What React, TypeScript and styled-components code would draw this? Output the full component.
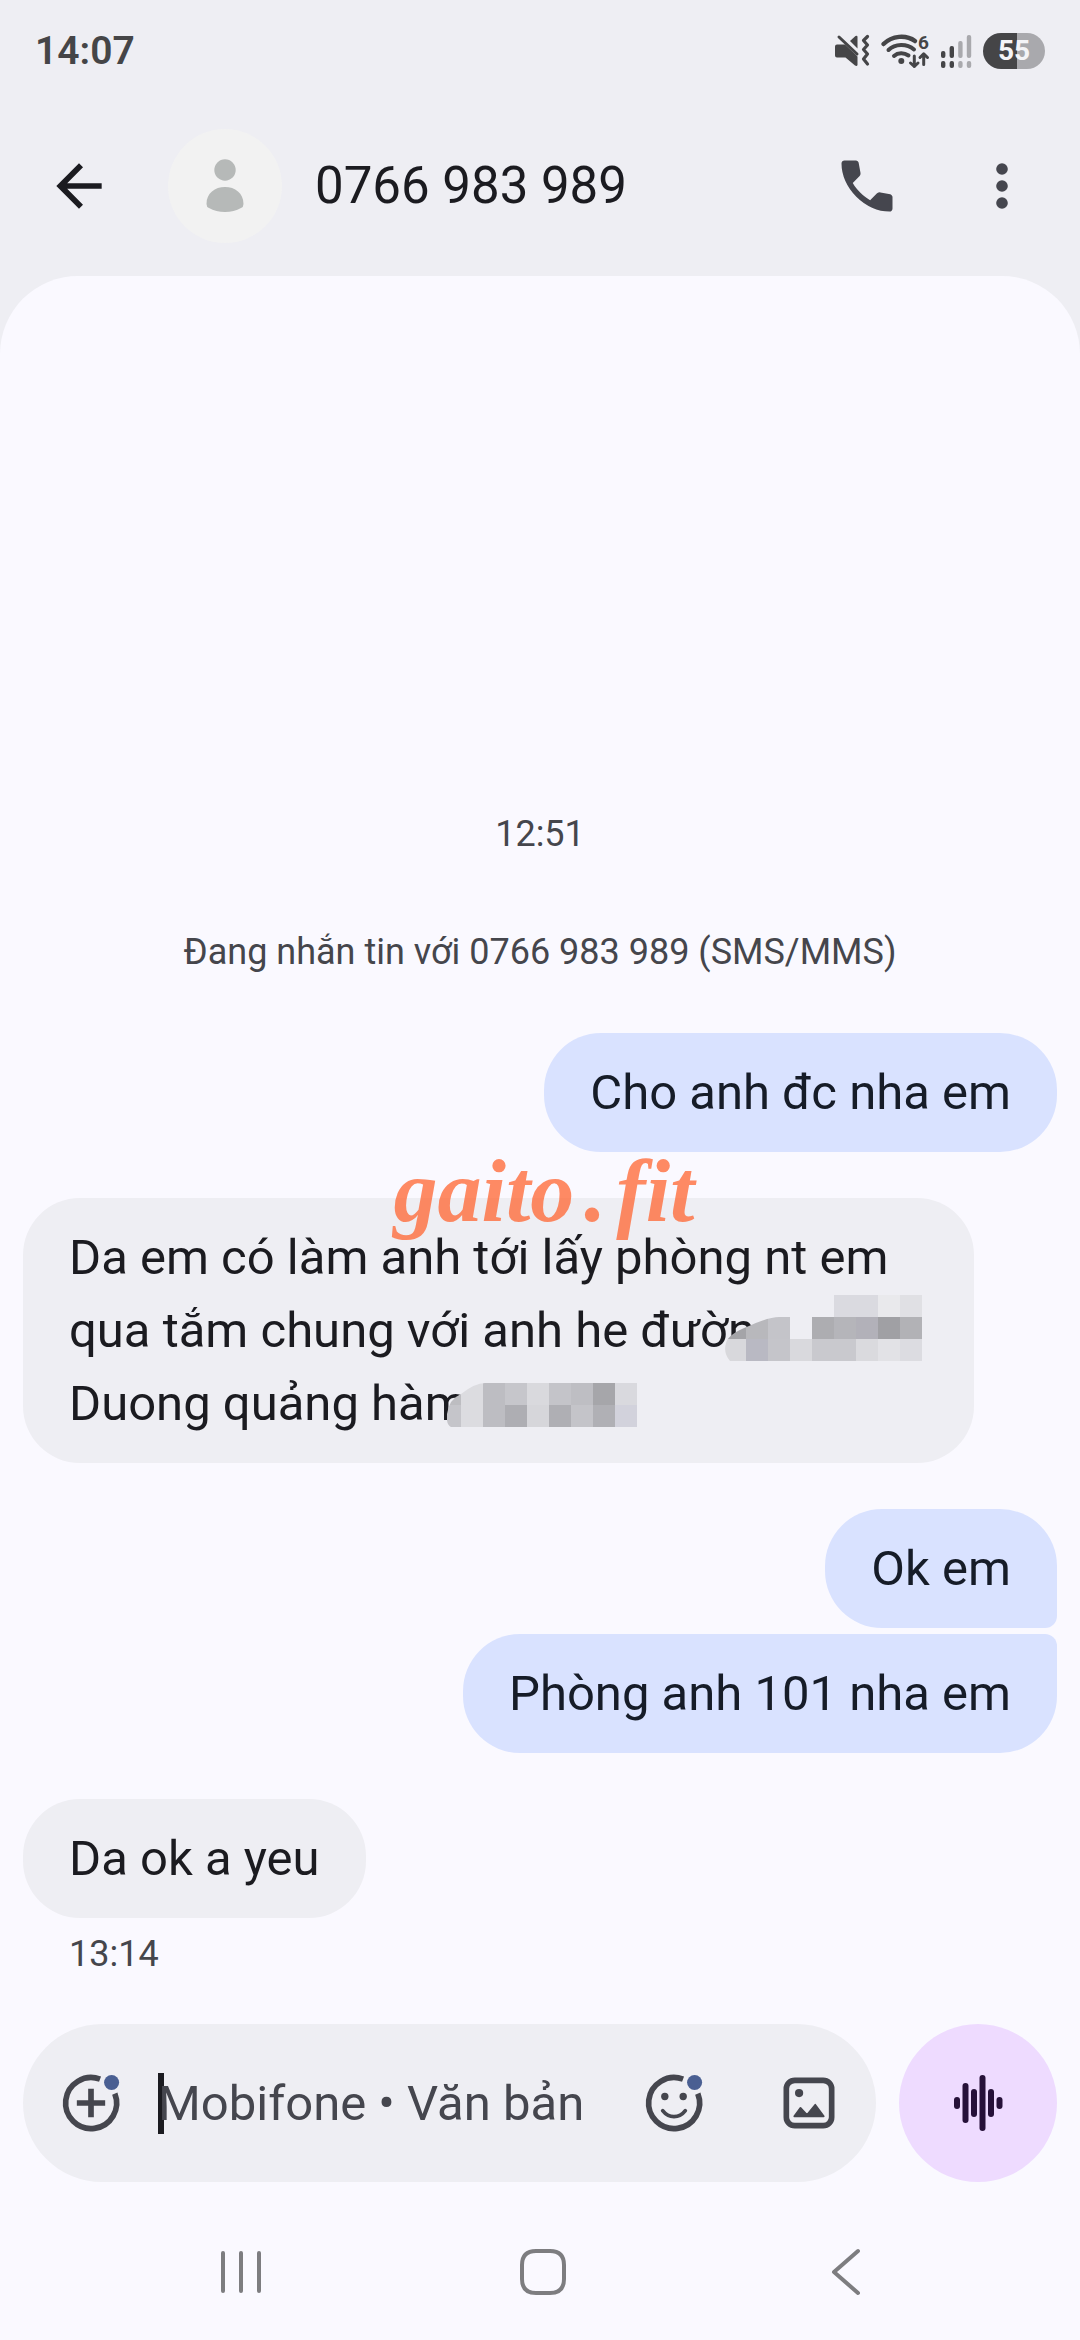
import React from "react";
import styled, { createGlobalStyle } from "styled-components";

const GlobalStyle = createGlobalStyle`
  *, *::before, *::after { box-sizing: border-box; }
  body { margin: 0; background: #eeeef3; }
  button, input { font: inherit; color: inherit; }
`;

const Screen = styled.div`
  display: flex;
  flex-direction: column;
  min-height: 100vh;
  background: #eeeef3;
  color: #1b1b20;
  font-family: Roboto, "Noto Sans", sans-serif;
  font-size: 49px;
  overflow-x: hidden;
`;

/* ---------- status bar ---------- */

const StatusBar = styled.div`
  display: flex;
  align-items: center;
  justify-content: space-between;
  height: 96px;
  padding: 6px 35px 0;
  color: #454547;
`;

const Clock = styled.time`
  font-size: 39px;
  font-weight: 600;
`;

const StatusIcons = styled.div`
  display: flex;
  align-items: center;
  gap: 11px;

  svg { overflow: visible; }
`;

const Battery = styled.span`
  width: 62px;
  height: 36px;
  border-radius: 18px;
  background: linear-gradient(90deg, #454547 55%, #a9a9ad 55%);
  color: #f4f4f7;
  font-size: 28px;
  font-weight: 700;
  line-height: 36px;
  text-align: center;
`;

const MuteIcon = () => (
  <svg width="35" height="34" viewBox="0 0 35 34" fill="#454547" aria-label="Rung">
    <path d="M2 10.500H10L22.500 22.500V31Q22 32.500 20 31.500L10.500 23.500H2Q0 23.500 0 21.500V12.500Q0 10.500 2 10.500Z" />
    <path d="M15 7L20.500 2Q22.500 1 22.500 3V14.500Z" />
    <path d="M4 3L22 20" stroke="#454547" strokeWidth="3" strokeLinecap="round" />
    <path
      d="M32.500 2.500L28.500 6.500L32.500 11L28.500 15.500L32.500 20L28.500 25L32.500 30"
      fill="none"
      stroke="#454547"
      strokeWidth="3.200"
      strokeLinecap="round"
      strokeLinejoin="round"
    />
  </svg>
);

const WifiIcon = () => (
  <svg width="48" height="34" viewBox="0 0 48 34" aria-label="Wi-Fi 6">
    <g fill="none" stroke="#454547" strokeWidth="4" strokeLinecap="round">
      <path d="M2.500 10C11 1.500 25 0.500 34 7" strokeWidth="4.500" />
      <path d="M7.500 16C14 9.500 26 9.500 33 15.500" />
      <path d="M13 22C17 18.500 23 18.500 27.500 21.500" />
      <path d="M33.300 22V32.500M29.500 29L33.300 32.500L37 29M42.700 30.500V20M39 23.500L42.700 19.800L46.500 23.500" strokeWidth="3" strokeLinejoin="round" />
    </g>
    <circle cx="20.300" cy="27" r="3" fill="#454547" />
    <text x="37" y="15" fontSize="19" fontWeight="700" fill="#454547">6</text>
  </svg>
);

const SignalIcon = () => (
  <svg width="32" height="34" viewBox="0 0 32 34" aria-label="Sóng di động">
    {[17, 12, 7, 1].map((top, i) => (
      <g key={top} fill={i < 2 ? "#454547" : "#a9a9ad"}>
        <rect x={1 + i * 8.6} y={top} width="4.400" height={24 - top} rx="2" />
        <rect x={1 + i * 8.6} y="27" width="4.400" height="7" rx="2" />
      </g>
    ))}
  </svg>
);

/* ---------- toolbar ---------- */

const Toolbar = styled.header`
  display: flex;
  align-items: center;
  height: 180px;
  padding: 0 44px 0 45px;
`;

const IconButton = styled.button`
  position: relative;
  display: flex;
  flex: none;
  width: 68px;
  height: 68px;
  padding: 0;
  border: 0;
  background: none;
  color: #45464e;
  cursor: pointer;

  svg { width: 100%; height: 100%; }
`;

const BackButton = styled(IconButton)`
  color: #1b1b20;
`;

const Avatar = styled.span`
  display: flex;
  align-items: center;
  justify-content: center;
  flex: none;
  width: 114px;
  height: 114px;
  margin-left: 55px;
  border-radius: 50%;
  background: #f2f2f2;
`;

const Title = styled.h1`
  flex: 1;
  min-width: 0;
  margin: 0 0 0 33px;
  font-size: 51px;
  font-weight: 400;
  line-height: 72px;
  white-space: nowrap;
`;

const Actions = styled.div`
  display: flex;
  gap: 67px;
`;

/* ---------- conversation ---------- */

const Panel = styled.main`
  display: flex;
  flex: 1;
  flex-direction: column;
  border-radius: 78px 78px 0 0;
  background: #faf9ff;
`;

const Thread = styled.section`
  display: flex;
  flex: 1;
  flex-direction: column;
  justify-content: flex-end;
  padding: 64px 23px 43px;
`;

const Note = styled.p<{ $gap: number }>`
  margin: 0 0 ${(p) => p.$gap}px;
  color: #45464c;
  font-size: 36px;
  line-height: 54px;
  text-align: center;
`;

const Group = styled.div<{ $mine?: boolean }>`
  position: relative;
  display: flex;
  flex-direction: column;
  align-items: ${(p) => (p.$mine ? "flex-end" : "flex-start")};
  gap: 6px;

  & + & { margin-top: 46px; }
`;

const Bubble = styled.div<{ $mine?: boolean; $wide?: boolean; $join?: "above" | "below" }>`
  position: relative;
  width: ${(p) => (p.$wide ? "92%" : "auto")};
  max-width: 92%;
  padding: 23px 46px;
  border-radius: 57px;
  border-bottom-right-radius: ${(p) => (p.$join === "below" ? 12 : 57)}px;
  border-top-right-radius: ${(p) => (p.$join === "above" ? 12 : 57)}px;
  background: ${(p) => (p.$mine ? "#d9e2ff" : "#eeeef3")};
  color: ${(p) => (p.$mine ? "#161c28" : "#1b1b20")};
  line-height: 73px;
`;

const SentAt = styled.time`
  margin: 3px 0 0 46px;
  color: #45464c;
  font-size: 36px;
  line-height: 54px;
`;

const Mosaic = styled.svg<{ $x: number; $y: number }>`
  position: absolute;
  left: ${(p) => p.$x}px;
  top: ${(p) => p.$y}px;
`;

const Watermark = styled.div`
  position: absolute;
  top: -54px;
  left: 8px;
  right: 0;
  display: flex;
  justify-content: center;
  gap: 10px;
  color: rgba(255, 100, 48, 0.75);
  font-family: "Liberation Serif", serif;
  font-size: 88px;
  font-style: italic;
  font-weight: 700;
  line-height: 96px;
  pointer-events: none;
`;

type Cell = [x: number, y: number, w: number, color: string];

const streetCells: Cell[] = [
  [109, 0, 44, "#dadae0"], [153, 0, 22, "#e9e9ec"], [175, 0, 22, "#e0e0e4"],
  [0, 22, 21, "#a4a4a8"], [21, 22, 22, "#b8b8bc"], [43, 22, 22, "#c4c4c9"],
  [87, 22, 22, "#adadb1"], [109, 22, 22, "#b5b5ba"], [131, 22, 22, "#b2b1b9"],
  [153, 22, 22, "#a0a0a4"], [175, 22, 22, "#b2b2b6"],
  [0, 44, 21, "#d8d8dc"], [21, 44, 22, "#b9b9c3"], [43, 44, 22, "#c5c5ca"],
  [65, 44, 22, "#d9d9dd"], [87, 44, 44, "#c9c9ce"], [131, 44, 22, "#dadade"],
  [153, 44, 22, "#e2e2e6"], [175, 44, 22, "#dcdce1"],
];

const numberCells: Cell[] = [
  [0, 0, 14, "#bdbdc1"], [14, 0, 22, "#dcdce0"], [36, 0, 22, "#bdbdc2"],
  [58, 0, 22, "#c6c6cb"], [80, 0, 22, "#d9d9dd"], [102, 0, 22, "#c4c4c9"],
  [124, 0, 22, "#bebec3"], [146, 0, 22, "#a6a6aa"], [168, 0, 22, "#d9d9de"],
  [0, 22, 14, "#c5c5ca"], [14, 22, 22, "#dcdce0"], [36, 22, 22, "#bdbdc2"],
  [58, 22, 22, "#aeaeb3"], [80, 22, 22, "#d6d6da"], [102, 22, 22, "#afafb4"],
  [124, 22, 22, "#c4c4c9"], [146, 22, 22, "#b0b0b5"], [168, 22, 22, "#d2d2dc"],
];

const Cells = ({ cells }: { cells: Cell[] }) => (
  <>
    {cells.map(([x, y, w, color]) => (
      <rect key={`${x}-${y}`} x={x} y={y} width={w} height="22" fill={color} />
    ))}
  </>
);

/* ---------- composer ---------- */

const Composer = styled.form`
  display: flex;
  gap: 23px;
  padding: 0 23px;
`;

const InputPill = styled.div`
  display: flex;
  flex: 1;
  align-items: center;
  min-width: 0;
  height: 158px;
  padding: 0 33px 0 34px;
  border-radius: 79px;
  background: #eeeef3;
`;

const Field = styled.label`
  position: relative;
  display: flex;
  flex: 1;
  align-items: center;
  min-width: 0;
  margin: 0 33px;
`;

const Caret = styled.span`
  position: absolute;
  left: 0;
  width: 6px;
  height: 61px;
  background: #1b1b20;
`;

const TextInput = styled.input`
  position: relative;
  width: 100%;
  height: 73px;
  padding: 0;
  border: 0;
  outline: 0;
  background: none;

  &::placeholder { color: #45464e; opacity: 1; }
`;

const VoiceButton = styled.button`
  display: flex;
  flex: none;
  align-items: center;
  justify-content: center;
  width: 158px;
  height: 158px;
  padding: 0;
  border: 0;
  border-radius: 50%;
  background: #eedbff;
  cursor: pointer;
`;

/* ---------- system navigation ---------- */

const NavBar = styled.nav`
  display: grid;
  grid-template-columns: 1fr 1fr 1fr;
  align-items: center;
  justify-items: center;
  height: 158px;
  padding: 22px 83px 0 90px;
`;

const NavButton = styled.button`
  display: flex;
  padding: 0;
  border: 0;
  background: none;
  cursor: pointer;
`;

const NavIcon = ({ d }: { d: string }) => (
  <svg width="50" height="50" viewBox="0 0 50 50" fill="none" stroke="#7d7d80" strokeWidth="4" strokeLinecap="round" strokeLinejoin="round">
    <path d={d} />
  </svg>
);

const Ring = () => (
  <path d="M20.400 8.700A9 9 0 1 1 15.200 3.600" fill="none" stroke="currentColor" strokeWidth="2" />
);

const NewDot = () => <circle cx="19.270" cy="4.760" r="2.650" fill="#4a5f92" />;

export default function App() {
  return (
    <>
      <GlobalStyle />
      <Screen>
        <StatusBar>
          <Clock>14:07</Clock>
          <StatusIcons>
            <MuteIcon />
            <WifiIcon />
            <SignalIcon />
            <Battery>55</Battery>
          </StatusIcons>
        </StatusBar>

        <Toolbar>
          <BackButton type="button" aria-label="Quay lại">
            <svg viewBox="0 0 24 24" fill="currentColor">
              <path d="M20 11H7.830l5.590-5.590L12 4l-8 8 8 8 1.410-1.410L7.830 13H20v-2z" />
            </svg>
          </BackButton>
          <Avatar>
            <svg width="38" height="56" viewBox="0 0 38 56" fill="#b6b9b8">
              <circle cx="19" cy="12" r="10.700" />
              <path d="M0.500 46C0.500 35 9 29 19 29S37.500 35 37.500 46Q37.500 49 35 50Q28 54 19 54T3 50Q0.500 49 0.500 46Z" />
            </svg>
          </Avatar>
          <Title>0766 983 989</Title>
          <Actions>
            <IconButton type="button" aria-label="Gọi">
              <svg viewBox="0 -960 960 960" fill="currentColor">
                <path d="M798-120q-125 0-247-54.500T329-329Q229-429 174.500-551T120-798q0-18 12-30t30-12h162q14 0 25 9.500t13 22.500l26 140q2 16-1 27t-11 19l-97 98q20 37 47.500 71.500T387-386q31 31 65 57.500t72 48.500l94-94q9-9 23.500-13.500T670-390l138 28q14 4 23 14.500t9 23.500v162q0 18-12 30t-30 12Z" />
              </svg>
            </IconButton>
            <IconButton type="button" aria-label="Tùy chọn khác">
              <svg viewBox="0 0 24 24" fill="currentColor">
                <circle cx="12" cy="6" r="2.050" />
                <circle cx="12" cy="12" r="2.050" />
                <circle cx="12" cy="18" r="2.050" />
              </svg>
            </IconButton>
          </Actions>
        </Toolbar>

        <Panel>
          <Thread>
            <Note $gap={64}>12:51</Note>
            <Note $gap={54}>Đang nhắn tin với 0766 983 989 (SMS/MMS)</Note>

            <Group $mine>
              <Bubble $mine>Cho anh đc nha em</Bubble>
            </Group>

            <Group>
              <Bubble $wide>
                Da em có làm anh tới lấy phòng nt em
                <br />
                qua tắm chung với anh he đường
                <br />
                Duong quảng hàm
                <Mosaic $x={702} $y={97} width="197" height="66" aria-hidden="true">
                  <clipPath id="street-edge">
                    <path d="M5 66Q-2 58 1 48Q3 39 24 31Q44 22 54 22H87V0H197V66Z" />
                  </clipPath>
                  <g clipPath="url(#street-edge)">
                    <Cells cells={streetCells} />
                  </g>
                </Mosaic>
                <Mosaic $x={424} $y={185} width="190" height="44" aria-hidden="true">
                  <clipPath id="number-edge">
                    <path d="M4 44Q-1 42 0 31Q2 16 14 11Q28 0 38 0H190V44Z" />
                  </clipPath>
                  <g clipPath="url(#number-edge)">
                    <Cells cells={numberCells} />
                  </g>
                </Mosaic>
              </Bubble>
              <Watermark>
                <span>gaito</span>
                <span>.</span>
                <span>fit</span>
              </Watermark>
            </Group>

            <Group $mine>
              <Bubble $mine $join="below">Ok em</Bubble>
              <Bubble $mine $join="above">Phòng anh 101 nha em</Bubble>
            </Group>

            <Group>
              <Bubble>Da ok a yeu</Bubble>
              <SentAt>13:14</SentAt>
            </Group>
          </Thread>

          <Composer onSubmit={(e) => e.preventDefault()}>
            <InputPill>
              <IconButton type="button" aria-label="Đính kèm">
                <svg viewBox="0 0 24 24">
                  <Ring />
                  <path d="M12 7V17M7 12H17" stroke="currentColor" strokeWidth="2" />
                  <NewDot />
                </svg>
              </IconButton>
              <Field>
                <Caret />
                <TextInput type="text" aria-label="Tin nhắn" placeholder="Mobifone • Văn bản" />
              </Field>
              <Actions>
                <IconButton type="button" aria-label="Biểu tượng cảm xúc">
                  <svg viewBox="0 0 24 24">
                    <Ring />
                    <circle cx="8.760" cy="9.700" r="1.300" fill="currentColor" />
                    <circle cx="15.240" cy="9.700" r="1.300" fill="currentColor" />
                    <path d="M8 14.700Q9.600 16.800 12 16.800T16 14.700" fill="none" stroke="currentColor" strokeWidth="1.300" strokeLinecap="round" />
                    <NewDot />
                  </svg>
                </IconButton>
                <IconButton type="button" aria-label="Thư viện ảnh">
                  <svg viewBox="0 0 24 24">
                    <rect x="4" y="4" width="16" height="16" rx="3" fill="none" stroke="currentColor" strokeWidth="2" />
                    <circle cx="8.500" cy="8.500" r="1.450" fill="currentColor" />
                    <path d="M6.800 16.700L9 13.700L11.300 16.200L14.200 12.600L17.200 16.700Z" fill="currentColor" stroke="currentColor" strokeWidth="0.600" strokeLinejoin="round" />
                  </svg>
                </IconButton>
              </Actions>
            </InputPill>
            <VoiceButton type="button" aria-label="Ghi âm">
              <svg width="56" height="56" viewBox="0 0 56 56" fill="#261139">
                {[12, 40, 28, 56, 28, 12].map((h, i) => (
                  <rect key={i} x={4 + i * 8.5} y={28 - h / 2} width="6" height={h} rx="3" />
                ))}
              </svg>
            </VoiceButton>
          </Composer>

          <NavBar>
            <NavButton type="button" aria-label="Gần đây">
              <NavIcon d="M7 6V44M25 6V44M43 6V44" />
            </NavButton>
            <NavButton type="button" aria-label="Trang chủ">
              <NavIcon d="M18 4H32Q46 4 46 18V32Q46 46 32 46H18Q4 46 4 32V18Q4 4 18 4Z" />
            </NavButton>
            <NavButton type="button" aria-label="Trở về">
              <NavIcon d="M37 4L13 25L37 46" />
            </NavButton>
          </NavBar>
        </Panel>
      </Screen>
    </>
  );
}
